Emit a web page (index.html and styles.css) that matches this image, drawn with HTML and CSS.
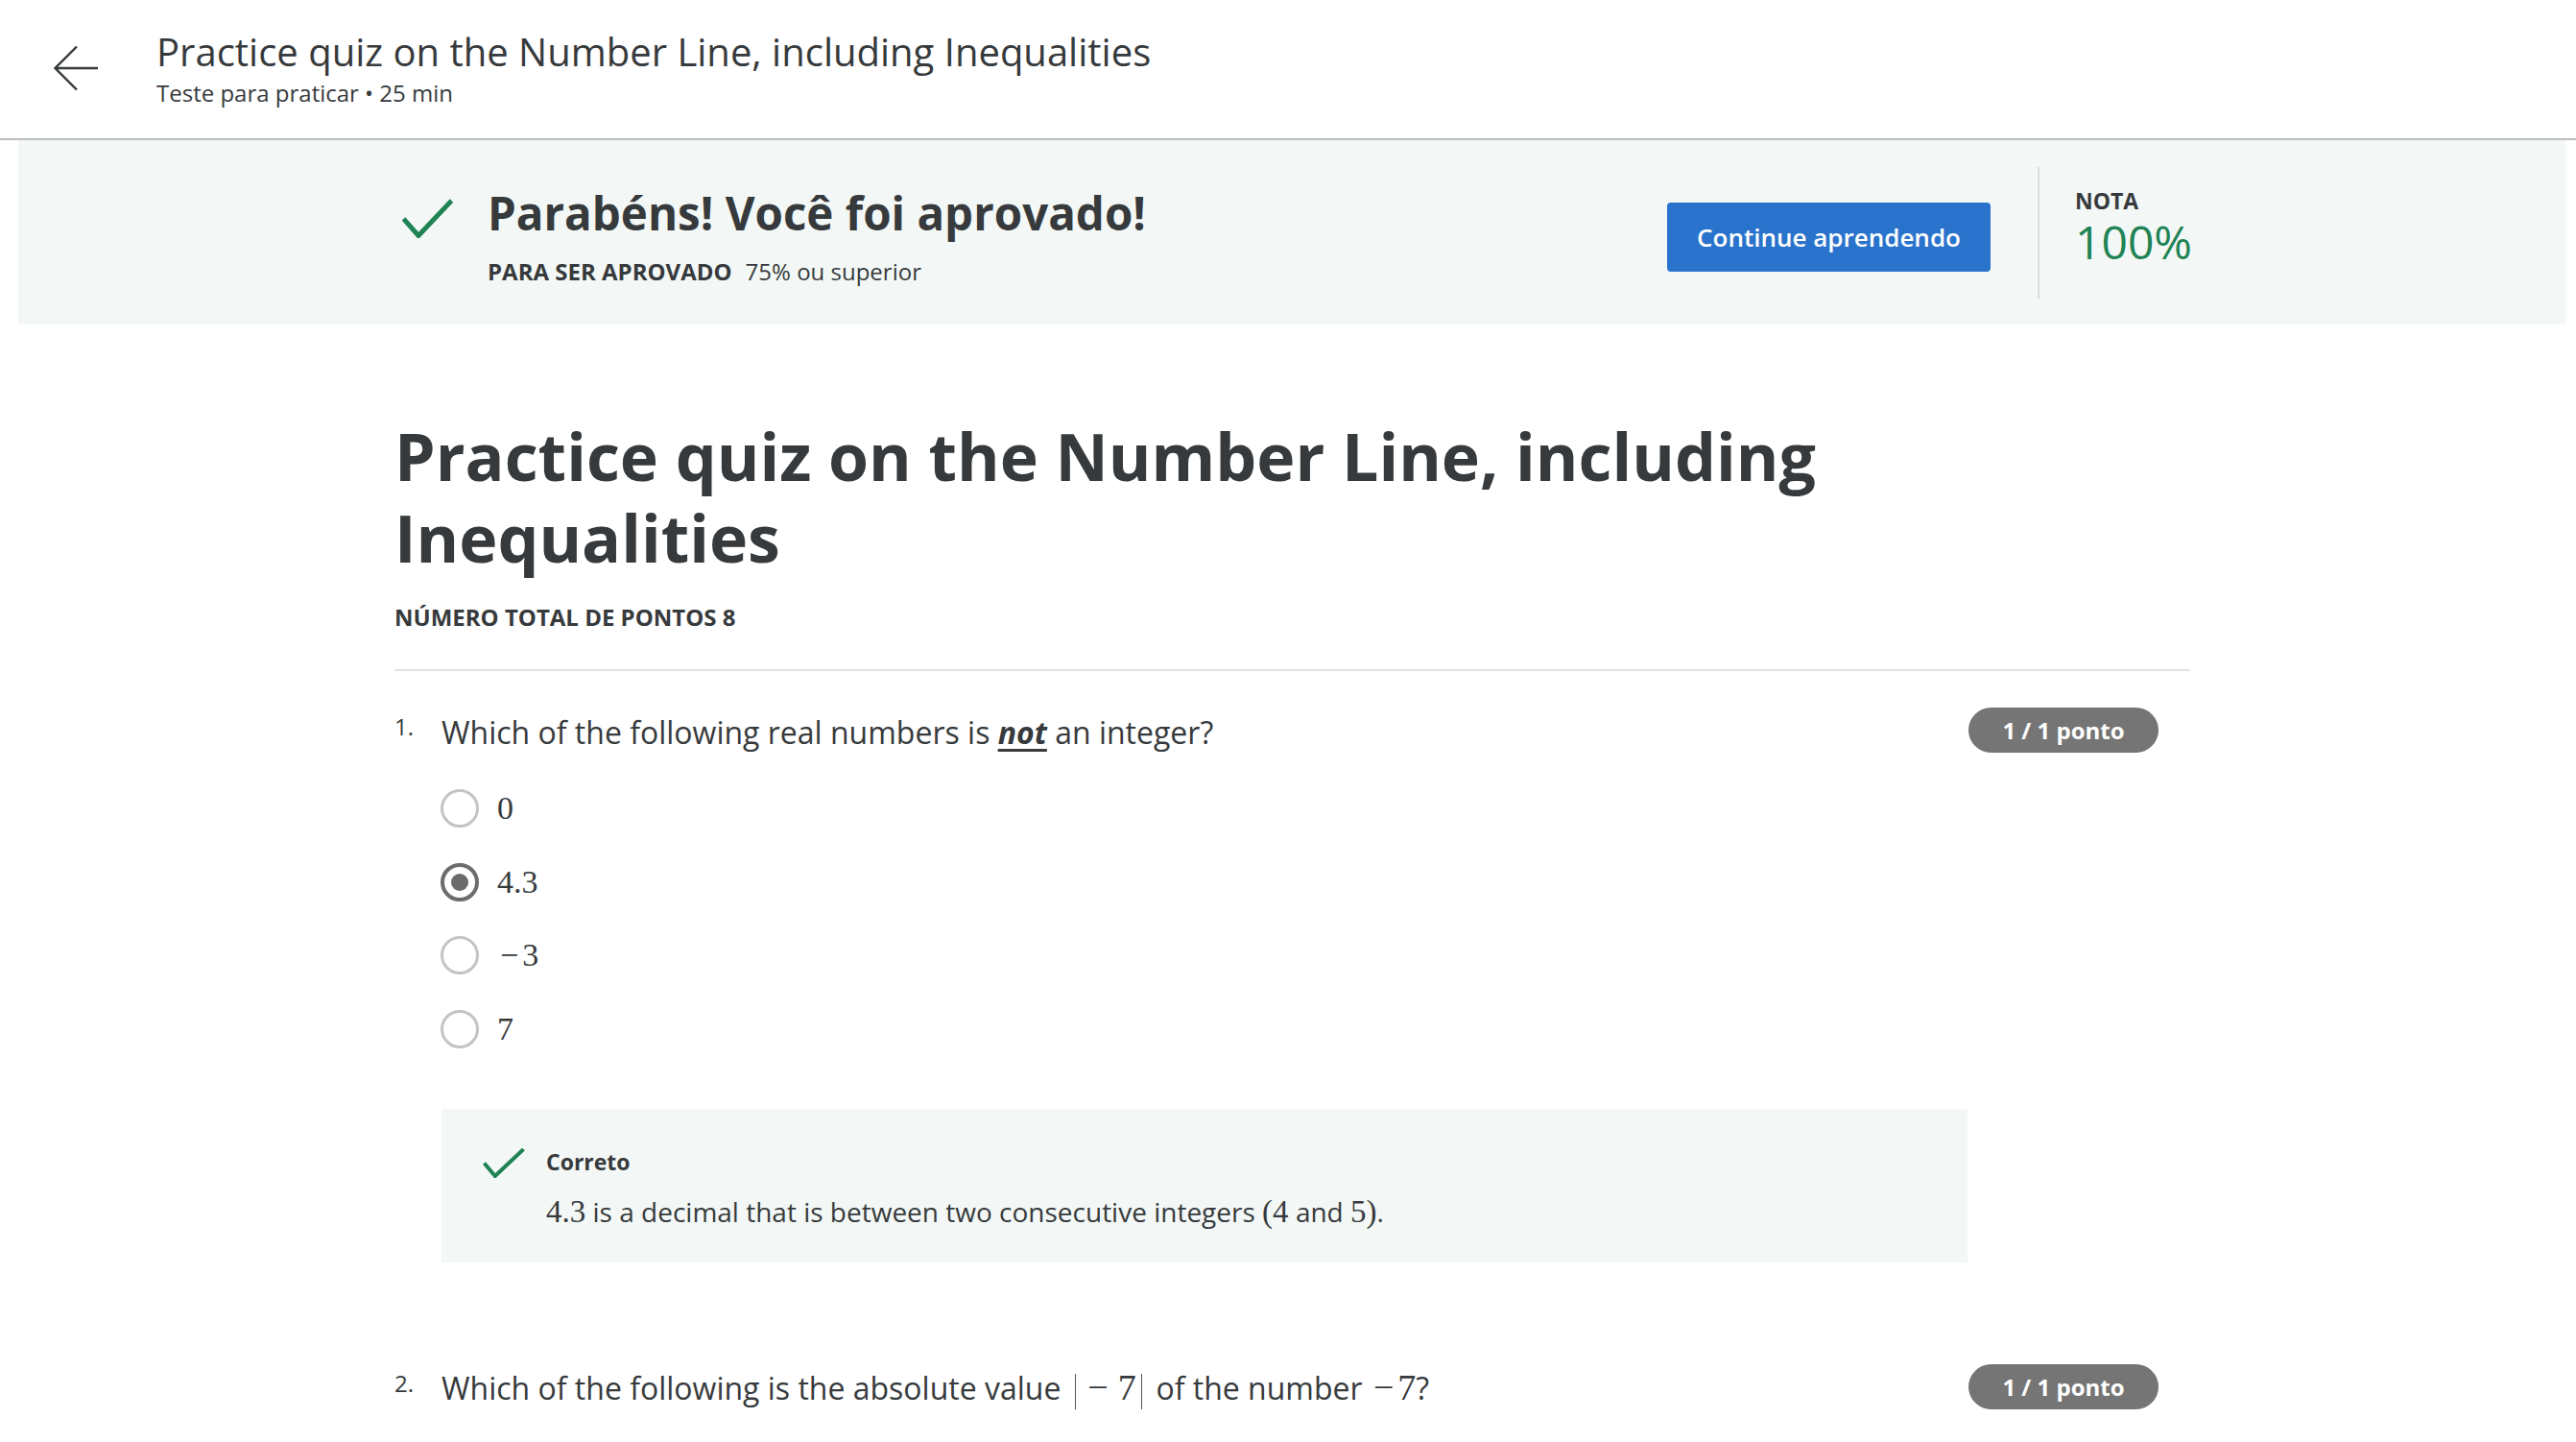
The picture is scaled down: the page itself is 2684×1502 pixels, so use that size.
FILE: index.html
```html
<!DOCTYPE html>
<html lang="pt">
<head>
<meta charset="utf-8">
<title>Practice quiz</title>
<link rel="stylesheet" href="styles.css">
</head>
<body>
<header class="topbar">
  <svg class="back" viewBox="0 0 46 46" aria-hidden="true"><path d="M1.5 23H46M24 0.5L1.5 23L24 45.5"/></svg>
  <div class="topbar-text">
    <div class="topbar-title">Practice quiz on the Number Line, including Inequalities</div>
    <div class="topbar-sub">Teste para praticar • 25 min</div>
  </div>
</header>

<section class="banner">
  <div class="banner-inner">
    <svg class="pass-check" viewBox="0 0 53 41" aria-hidden="true"><path d="M1.5 21L17 38.5L51.5 2"/></svg>
    <div class="pass-text">
      <div class="pass-title">Parabéns! Você foi aprovado!</div>
      <div class="pass-req"><span class="req-label">PARA SER APROVADO</span>75% ou superior</div>
    </div>
    <div class="actions">
      <button class="btn">Continue aprendendo</button>
      <div class="divider"></div>
      <div class="score">
        <div class="score-label">NOTA</div>
        <div class="score-value">100%</div>
      </div>
    </div>
  </div>
</section>

<main class="content">
  <h1 class="quiz-title">Practice quiz on the Number Line, including Inequalities</h1>
  <div class="total">NÚMERO TOTAL DE PONTOS 8</div>
  <div class="rule"></div>

  <div class="question">
    <div class="q-head">
      <span class="q-num">1.</span>
      <div class="q-text">Which of the following real numbers is <span class="emph">not</span> an integer?</div>
      <span class="badge">1 / 1 ponto</span>
    </div>
    <div class="options">
      <div class="option"><span class="radio"></span><span class="math">0</span></div>
      <div class="option"><span class="radio checked"></span><span class="math">4.3</span></div>
      <div class="option"><span class="radio"></span><span class="math"><span class="neg">−</span>3</span></div>
      <div class="option"><span class="radio"></span><span class="math">7</span></div>
    </div>
    <div class="feedback">
      <svg class="fb-check" viewBox="0 0 44 31" aria-hidden="true"><path d="M1.5 15.5L12.8 29L42.5 1"/></svg>
      <div class="fb-body">
        <div class="fb-title">Correto</div>
        <div class="fb-text"><span class="math">4.3</span> is a decimal that is between two consecutive integers <span class="math">(4</span> and <span class="math">5)</span>.</div>
      </div>
    </div>
  </div>

  <div class="question q2">
    <div class="q-head">
      <span class="q-num">2.</span>
      <div class="q-text">Which of the following is the absolute value <span class="abs math"><span class="bar"></span><span class="neg wide">−</span>7<span class="bar right"></span></span> of the number <span class="math"><span class="neg">−</span>7</span>?</div>
      <span class="badge">1 / 1 ponto</span>
    </div>
  </div>
</main>
</body>
</html>
```

FILE: styles.css
```css
html, body {
  margin: 0;
  padding: 0;
  background: #ffffff;
}

body {
  font-family: "Open Sans", "Noto Sans", "DejaVu Sans", sans-serif;
  color: #373a3c;
  width: 2684px;
  overflow: hidden;
}

/* ---------- top bar ---------- */
.topbar {
  display: flex;
  align-items: center;
  height: 144px;
  border-bottom: 2px solid #bdbdbd;
  box-sizing: content-box;
}

.back {
  width: 46px;
  height: 46px;
  margin-left: 56px;
  margin-right: 61px;
  margin-top: -2px;
  fill: none;
  stroke: #373a3c;
  stroke-width: 2.4;
}

.topbar-text {
  display: flex;
  flex-direction: column;
  margin-top: -2px;
}

.topbar-title {
  font-size: 40px;
  line-height: 48px;
  font-weight: 400;
  color: #373a3c;
}

.topbar-sub {
  font-size: 24px;
  line-height: 30px;
  margin-top: 4px;
  color: #373a3c;
}

/* ---------- banner ---------- */
.banner {
  margin: 0 11px 0 19px;
  height: 192px;
  background: #f3f8f6;
  display: flex;
}

.banner-inner {
  margin-left: 392px;
  width: 1871px;
  display: flex;
  align-items: center;
}

.pass-check {
  align-self: flex-start;
  width: 53px;
  height: 41px;
  margin-top: 61px;
  margin-left: 8px;
  margin-right: 36px;
  fill: none;
  stroke: #1f8354;
  stroke-width: 5;
}

.pass-text {
  align-self: flex-start;
  padding-top: 48px;
}

.pass-title {
  font-size: 47.5px;
  line-height: 56px;
  font-weight: 700;
}

.pass-req {
  margin-top: 18px;
  font-size: 24px;
  line-height: 30px;
}

.req-label {
  font-weight: 700;
  margin-right: 14px;
}

.actions {
  margin-left: auto;
  display: flex;
  align-items: center;
}

.btn {
  width: 337px;
  height: 72px;
  margin-top: 10px;
  border: none;
  border-radius: 4px;
  background: #2a73cc;
  color: #ffffff;
  font-family: "Open Sans", "Noto Sans", sans-serif;
  font-size: 26px;
  font-weight: 600;
  padding: 0;
}

.divider {
  width: 2px;
  height: 137px;
  background: #dcdcdc;
  margin-left: 49px;
  margin-right: 37px;
}

.score {
  width: 120px;
  margin-bottom: 12px;
}

.score-label {
  font-size: 23px;
  line-height: 30px;
  font-weight: 700;
}

.score-value {
  font-size: 48px;
  line-height: 52px;
  margin-top: 2px;
  color: #1f8354;
  font-weight: 400;
}

/* ---------- content ---------- */
.content {
  margin-left: 411px;
  width: 1871px;
}

.quiz-title {
  margin: 94px 0 0 0;
  font-size: 68px;
  line-height: 85px;
  font-weight: 700;
  color: #373a3c;
}

.total {
  margin-top: 26px;
  font-size: 24px;
  line-height: 30px;
  font-weight: 700;
}

.rule {
  margin-top: 39px;
  height: 2px;
  background: #e1e1e1;
}

.question {
  margin-top: 38px;
}

.q-head {
  display: flex;
  align-items: center;
  height: 47px;
}

.q-num {
  width: 49px;
  font-size: 24px;
  line-height: 40px;
  color: #373a3c;
  margin-top: -8px;
}

.q-text {
  font-size: 32px;
  line-height: 40px;
  margin-top: 4px;
}

.emph {
  font-weight: 700;
  font-style: italic;
  text-decoration: underline;
  text-decoration-thickness: 3px;
  text-underline-offset: 5px;
}

.badge {
  margin-left: auto;
  margin-right: 33px;
  width: 198px;
  height: 47px;
  border-radius: 24px;
  background: #757575;
  color: #ffffff;
  font-size: 24px;
  font-weight: 700;
  display: flex;
  align-items: center;
  justify-content: center;
}

.math {
  font-family: "Liberation Serif", "DejaVu Serif", serif;
  font-size: 34px;
}

.neg {
  padding: 0 4px 0 3px;
}

.options {
  margin-top: 20px;
  margin-left: 48px;
  display: flex;
  flex-direction: column;
}

.option {
  height: 76.5px;
  display: flex;
  align-items: center;
}

.radio {
  width: 40px;
  height: 40px;
  box-sizing: border-box;
  border: 3px solid #c4c4c4;
  border-radius: 50%;
  margin-right: 19px;
  display: flex;
  align-items: center;
  justify-content: center;
}

.radio.checked {
  border: 4px solid #6c6c6c;
}

.radio.checked::after {
  content: "";
  width: 18px;
  height: 18px;
  border-radius: 50%;
  background: #6c6c6c;
}

.option .math {
  font-size: 34px;
  color: #373a3c;
}

.feedback {
  margin-top: 45px;
  margin-left: 49px;
  width: 1590px;
  height: 160px;
  box-sizing: border-box;
  background: #f3f8f6;
  display: flex;
  padding: 41px 0 0 43px;
}

.fb-check {
  width: 44px;
  height: 31px;
  margin-right: 22px;
  fill: none;
  stroke: #1f8354;
  stroke-width: 4;
}

.fb-title {
  font-size: 23px;
  line-height: 30px;
  font-weight: 700;
  margin-top: -1px;
}

.fb-text {
  margin-top: 18px;
  font-size: 28px;
  line-height: 38px;
}

.fb-text .math {
  font-size: 33px;
}

.q2 {
  margin-top: 106px;
}

.abs {
  font-size: 38px;
  margin-left: 6px;
  margin-right: 6px;
}

.abs .bar {
  display: inline-block;
  width: 1.5px;
  height: 37px;
  background: #555;
  vertical-align: -10px;
  margin-right: 12px;
}

.abs .bar.right {
  margin-right: 0;
  margin-left: 5px;
}

.neg.wide {
  padding: 0 10px 0 0;
}

.q2 .q-text > .math {
  font-size: 38px;
}
```
